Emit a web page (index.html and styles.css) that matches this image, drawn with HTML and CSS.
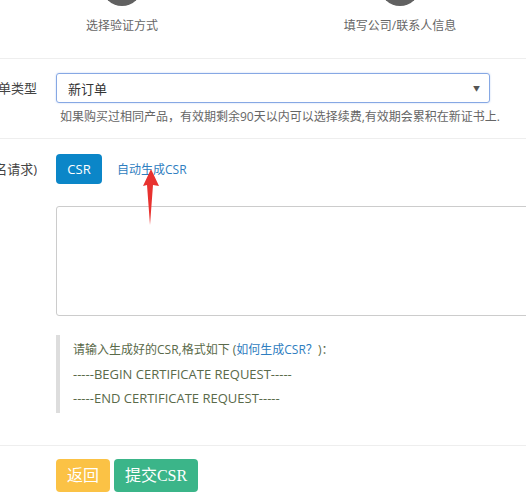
FILE: index.html
```html
<!DOCTYPE html>
<html lang="zh">
<head>
<meta charset="utf-8">
<title>CSR</title>
<link rel="stylesheet" href="styles.css">
</head>
<body>
<div class="steps">
  <div class="step"><div class="dot"></div><div class="step-label">选择验证方式</div></div>
  <div class="step"><div class="dot"></div><div class="step-label">填写公司/联系人信息</div></div>
</div>
<div class="form">
  <div class="row row-type">
    <div class="label"><span>订单类型</span></div>
    <div class="control">
      <div class="select"><span>新订单</span><span class="caret">▼</span></div>
      <p class="help">如果购买过相同产品，有效期剩余90天以内可以选择续费,有效期会累积在新证书上.</p>
    </div>
  </div>
  <div class="row row-csr">
    <div class="label"><span>CSR(证书签名请求)</span></div>
    <div class="control">
      <div class="tabs"><span class="btn-csr">CSR</span><a class="auto">自动生成CSR</a></div>
      <textarea class="csr-input"></textarea>
      <blockquote class="hint">
        <div>请输入生成好的CSR,格式如下 (<a class="hint-link">如何生成CSR<span class="fw">？</span></a>)：</div>
        <div class="latin">-----BEGIN CERTIFICATE REQUEST-----</div>
        <div class="latin">-----END CERTIFICATE REQUEST-----</div>
      </blockquote>
    </div>
  </div>
  <div class="actions">
    <span class="btn btn-back">返回</span><span class="btn btn-submit">提交CSR</span>
  </div>
</div>
<svg class="arrow" width="526" height="504" viewBox="0 0 526 504">
  <polygon points="151,169 159,186 153,185 150,225 147,185 143,186" fill="#e8322f"/>
</svg>
</body>
</html>
```
FILE: styles.css
```css
html, body {
  margin: 0;
  padding: 0;
  background: #fff;
  overflow: hidden;
  width: 526px;
  height: 504px;
}
body {
  font-family: "Open Sans", "Noto Sans CJK SC", sans-serif;
  color: #333;
  position: relative;
}
.steps {
  display: flex;
  padding-left: 42px;
  gap: 118px;
  padding-bottom: 24px;
  border-bottom: 1px solid #eeeeee;
}
.step {
  width: 160px;
  display: flex;
  flex-direction: column;
  align-items: center;
}
.dot {
  width: 40px;
  height: 40px;
  border-radius: 50%;
  background: #616161;
  margin-top: -34px;
}
.step-label {
  margin-top: 12px;
  font-size: 12px;
  line-height: 16px;
  color: #666;
}
.row {
  display: flex;
  border-bottom: 1px solid #eeeeee;
}
.label {
  width: 37px;
  flex: none;
  display: flex;
  justify-content: flex-end;
  overflow: hidden;
  white-space: nowrap;
  font-size: 13px;
  color: #444;
}
.label span {
  flex: none;
}
.control {
  margin-left: 19px;
  flex: none;
}
.row-type {
  padding: 14px 0 12px;
}
.row-type .label {
  line-height: 30px;
}
.select {
  box-sizing: border-box;
  width: 434px;
  height: 30px;
  border: 1px solid #86a8e4;
  border-radius: 3px;
  box-shadow: 0 0 2px rgba(102, 150, 230, 0.4);
  display: flex;
  align-items: center;
  justify-content: space-between;
  padding: 0 9px 0 11px;
  font-size: 13px;
  color: #333;
}
.caret {
  font-size: 7px;
  color: #555;
}
.help {
  margin: 5px 0 0 4px;
  font-size: 12px;
  line-height: 18px;
  color: #666;
}
.row-csr {
  padding: 15px 0 32px;
}
.row-csr .label {
  line-height: 30px;
}
.tabs {
  display: flex;
  align-items: center;
  height: 30px;
}
.btn-csr {
  width: 46px;
  height: 30px;
  line-height: 30px;
  text-align: center;
  background: #0b86c8;
  color: #fff;
  border-radius: 4px;
  font-size: 13px;
}
.auto {
  margin-left: 15px;
  font-size: 12px;
  color: #2f7ec0;
}
.csr-input {
  display: block;
  box-sizing: border-box;
  width: 490px;
  height: 110px;
  margin: 22px 0 0;
  border: 1px solid #cccccc;
  border-radius: 3px;
  resize: none;
  background: #fff;
}
.hint {
  margin: 19px 0 0;
  padding: 2px 0 3px 13px;
  border-left: 4px solid #dddddd;
  font-size: 12px;
  line-height: 24px;
  color: #5a6a4a;
}
.hint .latin {
  font-size: 13px;
}
.fw {
  font-family: "Noto Sans CJK SC", sans-serif;
}
.hint-link {
  color: #2f7ec0;
}
.actions {
  display: flex;
  gap: 4px;
  padding: 13px 0 0 56px;
}
.btn {
  height: 33px;
  line-height: 33px;
  text-align: center;
  color: #fff;
  border-radius: 4px;
  font-family: "Liberation Serif", "Noto Sans CJK SC", serif;
  font-size: 16px;
}
.btn-back {
  width: 54px;
  background: #fbc245;
}
.btn-submit {
  width: 84px;
  background: #3bb589;
}
.arrow {
  position: absolute;
  left: 0;
  top: 0;
  pointer-events: none;
}
```
